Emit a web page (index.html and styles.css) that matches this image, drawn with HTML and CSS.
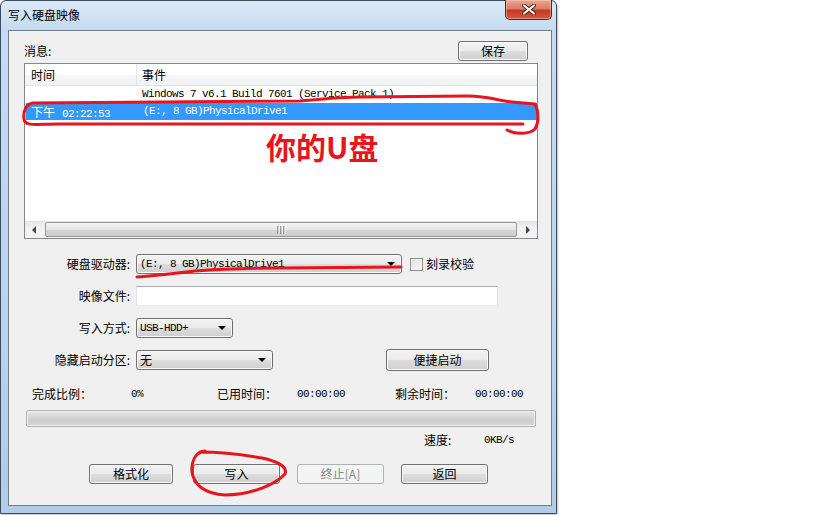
FILE: index.html
```html
<!DOCTYPE html>
<html lang="zh-CN">
<head>
<meta charset="utf-8">
<title>写入硬盘映像</title>
<link rel="stylesheet" href="styles.css">
</head>
<body>
<div class="window">
  <div class="titlebar">
    <span class="title">写入硬盘映像</span>
    <div class="close">
      <svg width="16" height="11" viewBox="0 0 16 11"><path d="M3 1.5 L13 9.5 M13 1.5 L3 9.5" stroke="#4a1c12" stroke-width="4" stroke-linecap="round"/><path d="M3 1.5 L13 9.5 M13 1.5 L3 9.5" stroke="#fff" stroke-width="2.2" stroke-linecap="round"/></svg>
    </div>
  </div>
  <div class="client">
    <div class="msg-head"><span>消息:</span><button class="btn save">保存</button></div>
    <div class="list">
      <div class="list-head"><div class="c1">时间</div><div class="c2">事件</div></div>
      <div class="list-body">
        <div class="row"><div class="c1"></div><div class="c2 mono">Windows 7 v6.1 Build 7601 (Service Pack 1)</div></div>
        <div class="row sel"><div class="c1">下午<span class="mono tm">02:22:53</span></div><div class="c2 mono">(E:, 8 GB)PhysicalDrive1</div></div>
      </div>
      <div class="hscroll">
        <div class="sarrow"><svg width="5" height="8" viewBox="0 0 5 8"><path d="M4 0 L0 4 L4 8 Z" fill="#444"/></svg></div>
        <div class="thumb"><svg width="9" height="8" viewBox="0 0 9 8"><path d="M1 0V8M4 0V8M7 0V8" stroke="#555" stroke-width="1"/><path d="M2 0V8M5 0V8M8 0V8" stroke="#fff" stroke-width="1"/></svg></div>
        <div class="sarrow"><svg width="5" height="8" viewBox="0 0 5 8"><path d="M1 0 L5 4 L1 8 Z" fill="#444"/></svg></div>
      </div>
    </div>

    <div class="frow first">
      <span class="lbl">硬盘驱动器:</span>
      <div class="combo w-drive"><span class="mono">(E:, 8 GB)PhysicalDrive1</span><i class="caret"></i></div>
      <span class="check"></span><span class="chk-lbl">刻录校验</span>
    </div>
    <div class="frow">
      <span class="lbl">映像文件:</span>
      <div class="input"></div>
    </div>
    <div class="frow">
      <span class="lbl">写入方式:</span>
      <div class="combo w-mode"><span class="mono">USB-HDD+</span><i class="caret"></i></div>
    </div>
    <div class="frow">
      <span class="lbl">隐藏启动分区:</span>
      <div class="combo w-hide"><span>无</span><i class="caret"></i></div>
      <button class="btn quick">便捷启动</button>
    </div>

    <div class="stats">
      <span>完成比例：</span><span class="mono">0%</span>
      <span>已用时间：</span><span class="mono">00:00:00</span>
      <span>剩余时间：</span><span class="mono">00:00:00</span>
    </div>
    <div class="progress"></div>
    <div class="speed"><span>速度:</span><span class="mono">0KB/s</span></div>

    <div class="actions">
      <button class="btn a1">格式化</button>
      <button class="btn a2">写入</button>
      <button class="btn a3" disabled>终止[A]</button>
      <button class="btn a4">返回</button>
    </div>
  </div>
</div>

<div class="note">你的U盘</div>
<svg class="marks" width="819" height="515" viewBox="0 0 819 515">
  <g fill="none" stroke="#e8141e" stroke-width="3" stroke-linecap="round" stroke-linejoin="round">
    <path d="M523 124 L60 124 C36 124 25 127 24 119 C23 111 26 104 33 103 L300 101 C322 99 342 97 362 97 L468 96 C488 96 500 101 512 102 L535 104 C539 112 539 122 535 129 C530 134 516 135 507 130"/>
    <path d="M137 277 C155 276 175 273 195 271 C220 269 250 268 280 268 L401 267"/>
    <path d="M205 451 C195 452 191 462 192 472 C194 485 205 494 225 495 C250 495 275 485 285 474 C288 466 276 461 262 458 C245 455 225 452 200 452"/>
  </g>
</svg>
</body>
</html>
```

FILE: styles.css
```css
html, body {
  margin: 0;
  padding: 0;
}
body {
  width: 819px;
  height: 515px;
  background: #ffffff;
  position: relative;
  overflow: hidden;
  font-family: "Noto Sans CJK SC", "Noto Sans", sans-serif;
  font-size: 12px;
  line-height: 14px;
  color: #000;
}
.mono {
  font-family: "Liberation Mono", "DejaVu Sans Mono", monospace;
  font-size: 11px;
  letter-spacing: -0.6px;
}
.tm { margin-left: 7px; }
.window {
  width: 557px;
  height: 514px;
  box-sizing: border-box;
  border: 1px solid #3a4d60;
  border-radius: 6px 6px 0 0;
  background: linear-gradient(180deg, #dbe9f7 0px, #c6dbf0 28px, #bcd3ec 60%, #b2cbe6 100%);
  padding: 0 4px 7px 7px;
  display: flex;
  flex-direction: column;
  box-shadow: 1px 1px 2px rgba(0,0,0,0.25);
}
.titlebar {
  height: 29px;
  display: flex;
  align-items: flex-start;
}
.title {
  margin-top: 6px;
  font-size: 12px;
  line-height: 16px;
  color: #000;
}
.close {
  margin-left: auto;
  margin-top: -1px;
  width: 47px;
  height: 20px;
  box-sizing: border-box;
  border: 1px solid #5a2419;
  border-top: none;
  border-radius: 0 0 5px 5px;
  background: linear-gradient(180deg, #eaa896 0%, #dc7c66 45%, #c43a20 55%, #d4583d 100%);
  display: flex;
  align-items: center;
  justify-content: center;
  box-shadow: inset 0 0 0 1px rgba(255,220,200,0.45);
}
.client {
  flex: 1;
  border: 1px solid #6b7d8f;
  background: #f0f0f0;
  padding: 10px 13px 0 15px;
  display: flex;
  flex-direction: column;
}
.msg-head {
  display: flex;
  justify-content: space-between;
  align-items: center;
  height: 20px;
  padding-right: 10px;
}
.btn {
  height: 20px;
  box-sizing: border-box;
  border: 1px solid #707070;
  border-radius: 3px;
  background: linear-gradient(180deg, #f2f2f2 0%, #ebebeb 50%, #dddddd 51%, #cfcfcf 100%);
  box-shadow: inset 0 0 0 1px #fbfbfb;
  font-family: "Noto Sans CJK SC", sans-serif;
  font-size: 12px;
  line-height: 16px;
  padding: 0;
  color: #000;
}
.btn:disabled {
  border-color: #adb2b5;
  background: #f4f4f4;
  color: #8a8a8a;
  box-shadow: none;
}
.save { width: 70px; }
.list {
  margin-top: 2px;
  height: 176px;
  box-sizing: border-box;
  border: 1px solid #828790;
  background: #fff;
  display: flex;
  flex-direction: column;
}
.list-head {
  height: 22px;
  box-sizing: border-box;
  border-bottom: 1px solid #e2e3e6;
  display: grid;
  grid-template-columns: 112px 1fr;
  background: linear-gradient(180deg, #ffffff 0%, #ffffff 50%, #f6f7f9 51%, #f1f2f4 100%);
  line-height: 21px;
}
.list-head .c1 {
  padding-left: 6px;
  border-right: 1px solid #e2e3e6;
}
.list-head .c2 { padding-left: 5px; }
.list-body { flex: 1; }
.row {
  height: 17px;
  display: grid;
  grid-template-columns: 112px 1fr;
  line-height: 17px;
  white-space: nowrap;
}
.row .c1 { padding-left: 6px; }
.row .c2 { padding-left: 5px; }
.row.sel {
  background: #3399ff;
  color: #fff;
  margin-left: 1px;
}
.row.sel .c1 { padding-left: 5px; }
.hscroll {
  height: 17px;
  display: flex;
  background: linear-gradient(180deg, #e4e4e4, #f2f2f2 40%, #f2f2f2);
}
.sarrow {
  width: 19px;
  display: flex;
  align-items: center;
  justify-content: center;
}
.thumb {
  flex: 1;
  margin: 1px 1px;
  box-sizing: border-box;
  border: 1px solid #979797;
  border-radius: 2px;
  background: linear-gradient(180deg, #f3f3f3 0%, #e6e6e6 50%, #d6d6d6 51%, #cdcdcd 100%);
  display: flex;
  align-items: center;
  justify-content: center;
}
.frow {
  display: flex;
  align-items: center;
  height: 20px;
  margin-top: 12px;
}
.frow.first { margin-top: 15px; }
.lbl {
  width: 106px;
  margin-right: 6px;
  text-align: right;
}
.combo {
  height: 20px;
  box-sizing: border-box;
  border: 1px solid #707070;
  border-radius: 3px;
  background: linear-gradient(180deg, #f2f2f2 0%, #ebebeb 50%, #dddddd 51%, #cfcfcf 100%);
  box-shadow: inset 0 0 0 1px #fbfbfb;
  display: flex;
  align-items: center;
  padding-left: 3px;
}
.caret {
  margin-left: auto;
  margin-right: 6px;
  width: 0;
  height: 0;
  border-top: 4px solid #000;
  border-left: 4px solid transparent;
  border-right: 4px solid transparent;
}
.w-drive { width: 266px; }
.w-mode { width: 97px; }
.w-hide { width: 137px; }
.check {
  width: 13px;
  height: 13px;
  box-sizing: border-box;
  margin-left: 8px;
  border: 1px solid #8e8f8f;
  background: linear-gradient(135deg, #dcdcdc, #fbfbfb);
  box-shadow: inset 0 0 0 1px #f4f4f4;
}
.chk-lbl { margin-left: 3px; }
.input {
  width: 362px;
  height: 20px;
  box-sizing: border-box;
  border: 1px solid #abadb3;
  border-color: #abadb3 #dbdfe6 #e3e9ef #e2e3ea;
  background: #fff;
}
.quick {
  width: 103px;
  height: 22px;
  margin-left: 113px;
}
.stats {
  margin-top: 17px;
  padding-left: 8px;
  display: grid;
  grid-template-columns: 99px 86px 80px 98px 80px auto;
  line-height: 14px;
  align-items: center;
}
.progress {
  margin: 9px 0 0 2px;
  width: 510px;
  height: 17px;
  box-sizing: border-box;
  border: 1px solid #b2b2b2;
  border-radius: 2px;
  background: linear-gradient(180deg, #e8e8e8 0%, #d6d6d6 40%, #cdcdcd 60%, #d9d9d9 100%);
  box-shadow: inset 0 0 0 1px #efefef;
}
.speed {
  margin-top: 6px;
  padding-left: 400px;
  display: grid;
  grid-template-columns: 60px auto;
  line-height: 14px;
  align-items: center;
}
.actions {
  margin-top: 17px;
  padding-left: 65px;
  display: flex;
}
.a1 { width: 84px; }
.a2 { width: 87px; margin-left: 20px; }
.a3 { width: 87px; margin-left: 17px; }
.a4 { width: 87px; margin-left: 17px; }
.note {
  position: absolute;
  left: 266px;
  top: 127px;
  font-family: "Noto Sans CJK SC", sans-serif;
  font-weight: 700;
  font-size: 30px;
  line-height: 38px;
  color: #e8141e;
}
.marks {
  position: absolute;
  left: 0;
  top: 0;
  pointer-events: none;
}
```
